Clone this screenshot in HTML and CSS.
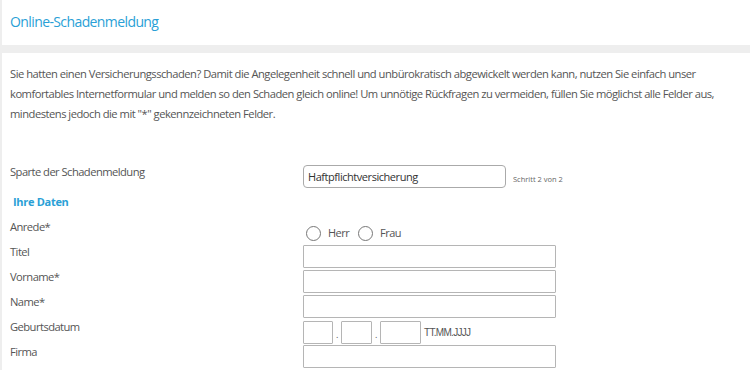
FILE: index.html
```html
<!DOCTYPE html>
<html lang="de">
<head>
  <meta charset="UTF-8">
  <meta name="viewport" content="width=device-width, initial-scale=1.0">
  <title>Online-Schadenmeldung</title>
  <link rel="stylesheet" href="styles.css">
</head>
<body>

  <div class="kopf">
    <h1>Online-Schadenmeldung</h1>
  </div>

  <div class="inhalt">
    <p class="intro">Sie hatten einen Versicherungsschaden? Damit die Angelegenheit schnell und unbürokratisch abgewickelt werden kann, nutzen Sie einfach unser komfortables Internetformular und melden so den Schaden gleich online! Um unnötige Rückfragen zu vermeiden, füllen Sie möglichst alle Felder aus, mindestens jedoch die mit "*" gekennzeichneten Felder.</p>

    <form class="formular">
      <div class="zeile zeile-sparte">
        <label>Sparte der Schadenmeldung</label>
        <div class="feld">
          <div class="auswahl">Haftpflichtversicherung</div>
          <span class="schritt">Schritt 2 von 2</span>
        </div>
      </div>

      <h3 class="abschnitt">Ihre Daten</h3>

      <div class="zeile zeile-anrede">
        <label>Anrede*</label>
        <div class="feld">
          <span class="radio"></span><span class="radio-text">Herr</span>
          <span class="radio"></span><span class="radio-text">Frau</span>
        </div>
      </div>

      <div class="zeile">
        <label>Titel</label>
        <div class="feld"><input type="text" class="eingabe"></div>
      </div>
      <div class="zeile">
        <label>Vorname*</label>
        <div class="feld"><input type="text" class="eingabe"></div>
      </div>
      <div class="zeile">
        <label>Name*</label>
        <div class="feld"><input type="text" class="eingabe"></div>
      </div>
      <div class="zeile">
        <label>Geburtsdatum</label>
        <div class="feld datum">
          <input type="text" class="eingabe tag">
          <span class="punkt">.</span>
          <input type="text" class="eingabe monat">
          <span class="punkt">.</span>
          <input type="text" class="eingabe jahr">
          <span class="format">TT.MM.JJJJ</span>
        </div>
      </div>
      <div class="zeile">
        <label>Firma</label>
        <div class="feld"><input type="text" class="eingabe"></div>
      </div>
    </form>
  </div>

</body>
</html>
```

FILE: styles.css
```css
body {
  margin: 0;
  background-color: #eeeeee;
  font-family: "Open Sans", Arial, sans-serif;
  color: #555555;
}
.kopf {
  margin-left: 2px;
  height: 45px;
  background-color: #ffffff;
}
.kopf h1 {
  margin: 0;
  padding: 12px 0 0 8px;
  font-size: 14px;
  letter-spacing: -0.6px;
  font-weight: normal;
  color: #2a9fd6;
}
.inhalt {
  margin-top: 8px;
  margin-left: 2px;
  background-color: #ffffff;
  padding: 11px 0 0 8px;
  height: 306px;
}
.intro {
  margin: 0;
  max-width: 728px;
  font-size: 11.2px;
  letter-spacing: -0.5px;
  line-height: 20px;
}
.formular {
  margin-top: 40px;
}
.zeile {
  display: flex;
  align-items: flex-start;
  height: 25px;
  font-size: 11.2px;
  letter-spacing: -0.55px;
  line-height: 16px;
}
.zeile label {
  width: 293px;
  flex-shrink: 0;
}
.feld {
  display: flex;
  align-items: center;
  padding-top: 1px;
}
.zeile-sparte {
  height: 30px;
}
.auswahl {
  box-sizing: border-box;
  width: 203px;
  height: 23px;
  border: 1px solid #aaaaaa;
  border-radius: 4px;
  padding: 3px 4px;
  font-size: 11px;
  letter-spacing: -0.45px;
  color: #333333;
}
.schritt {
  margin-left: 7px;
  font-size: 7.5px;
  letter-spacing: 0;
  color: #666666;
  padding-top: 4px;
}
.abschnitt {
  margin: 0;
  height: 25px;
  line-height: 16px;
  padding-left: 3px;
  font-size: 11px;
  letter-spacing: -0.3px;
  font-weight: bold;
  color: #2a9fd6;
}
.zeile-anrede .feld {
  padding-top: 6px;
}
.radio {
  box-sizing: border-box;
  width: 15px;
  height: 15px;
  border: 1px solid #777777;
  border-radius: 50%;
  margin-left: 3px;
}
.radio-text {
  margin-left: 7px;
  margin-right: 6px;
  font-size: 11px;
}
.eingabe {
  box-sizing: border-box;
  width: 253px;
  height: 23px;
  margin: 0;
  border: 1px solid #b5b5b5;
  border-radius: 1px;
  background-color: #ffffff;
}
.datum {
  padding-top: 2px;
}
.datum .tag {
  width: 30px;
}
.datum .monat {
  width: 31px;
}
.datum .jahr {
  width: 41px;
}
.punkt {
  width: 8px;
  text-align: center;
  font-size: 9px;
  padding-top: 4px;
}
.format {
  margin-left: 3px;
  font-family: "Liberation Sans", Arial, sans-serif;
  font-size: 10px;
  font-weight: normal;
  letter-spacing: -0.7px;
  color: #555555;
}
```
